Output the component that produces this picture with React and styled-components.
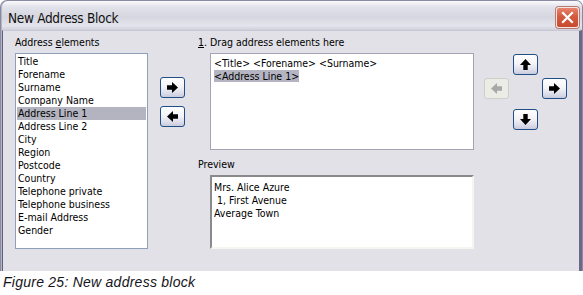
import React from "react";
import styled, { createGlobalStyle } from "styled-components";

const Global = createGlobalStyle`
  html, body { margin: 0; padding: 0; background: #ffffff; }
  body { font-family: "Liberation Sans", Arial, sans-serif; }
`;

const Page = styled.div`
  width: 583px;
  height: 295px;
  display: flex;
  flex-direction: column;
  overflow: hidden;
`;

const Window = styled.div`
  width: 583px;
  height: 271px;
  box-sizing: border-box;
  display: flex;
  flex-direction: column;
  border-radius: 7px 7px 0 0;
  background: #b4b4c6;
  border: 1px solid #8a8aa2;
  border-bottom: none;
  padding: 0 0 0 1px;
`;

const TitleBar = styled.div`
  height: 29px;
  flex: none;
  display: flex;
  align-items: center;
  justify-content: space-between;
  padding: 0 3px 0 6px;
  border-radius: 6px 6px 0 0;
  background: linear-gradient(to bottom, #fbfbfd 0%, #e2e2ea 20%, #d6d6e0 55%, #e4e4ec 85%, #d0d0dc 100%);
`;

const Title = styled.span`
  font-family: "DejaVu Sans Condensed", "Liberation Sans", Arial, sans-serif;
  font-size: 13.5px;
  letter-spacing: -0.3px;
  color: #111;
  padding-top: 5px;
`;

const CloseButton = styled.div`
  width: 21px;
  height: 19px;
  border: 1px solid #f4e6e2;
  border-radius: 3px;
  background: linear-gradient(to bottom, #e8846c 0%, #d45a3e 45%, #c84a2e 100%);
  display: flex;
  align-items: center;
  justify-content: center;
  box-shadow: 0 0 0 1px #b87a70;
  margin-top: 3px;
`;

const Body = styled.div`
  flex: 1;
  display: flex;
  align-items: flex-start;
  background: #e1e1e7;
  border-left: 1px solid #60607c;
  border-right: 3px solid #6a6a86;
  border-top: 1px solid #c8c8d4;
  padding: 5px 0 0 12px;
  font-family: "DejaVu Sans Condensed", "Liberation Sans", Arial, sans-serif;
  font-size: 10.5px;
  line-height: 13px;
  color: #000;
`;

const Column = styled.div`
  display: flex;
  flex-direction: column;
  flex: none;
  width: ${(p) => p.$w}px;
  margin-left: ${(p) => p.$ml || 0}px;
  margin-top: ${(p) => p.$mt || 0}px;
  gap: ${(p) => p.$gap || 0}px;
`;

const Label = styled.div`
  height: 13px;
  margin-top: ${(p) => p.$mt || 0}px;
  white-space: nowrap;
`;

const Key = styled.span`
  text-decoration: underline;
  text-underline-offset: 1px;
`;

const ListBox = styled.div`
  margin-top: 4px;
  height: 196px;
  box-sizing: border-box;
  border: 1px solid #8fa0b8;
  background: #fff;
  padding: 1px;
  display: flex;
  flex-direction: column;
`;

const ListItem = styled.div`
  height: 13px;
  padding-left: 1px;
  white-space: nowrap;
  background: ${(p) => (p.$selected ? "#b4b4c0" : "transparent")};
`;

const ArrowButton = styled.div`
  width: 25px;
  height: 21px;
  box-sizing: border-box;
  border: 1px solid ${(p) => (p.$disabled ? "#cfcfc8" : "#1f4f86")};
  border-radius: 3px;
  background: ${(p) =>
    p.$disabled
      ? "#ecece6"
      : "linear-gradient(to bottom, #ffffff 0%, #f4f4f8 45%, #dcdde9 80%, #c9cadc 100%)"};
  display: flex;
  align-items: center;
  justify-content: center;
  grid-area: ${(p) => p.$area || "auto"};
`;

const TextBox = styled.div`
  margin-top: 4px;
  margin-left: 12px;
  height: 97px;
  box-sizing: border-box;
  border: 1px solid #a4a4b4;
  background: #fff;
  padding: 3px 3px;
`;

const Line = styled.div`
  height: 13px;
  white-space: pre;
`;

const Mark = styled.span`
  background: #b4b4c2;
`;

const PreviewBox = styled.div`
  margin-top: 4px;
  margin-left: 12px;
  height: 74px;
  box-sizing: border-box;
  border-style: solid;
  border-width: 2px;
  border-color: #8a8a8a #f6f6f0 #f6f6f0 #8a8a8a;
  background: #fff;
  padding: 4px 2px;
`;

const Pad = styled.div`
  margin-left: 10px;
  margin-top: 18px;
  display: grid;
  grid-template-columns: 25px 25px 25px;
  grid-template-rows: 24px 31px 21px;
  column-gap: 4px;
  align-items: start;
  grid-template-areas:
    ". up ."
    "left . right"
    ". down .";
`;

const Caption = styled.div`
  padding: 2px 0 0 3px;
  font-family: "Liberation Sans", Arial, sans-serif;
  font-style: italic;
  font-size: 14px;
  letter-spacing: 0.25px;
  line-height: 18px;
  color: #141420;
`;

const Arrow = ({ dir = "right", color = "#000" }) => {
  const rot = { right: 0, down: 90, left: 180, up: 270 }[dir];
  return (
    <svg width="13" height="13" viewBox="0 0 13 13">
      <polygon
        points="1,4.3 6,4.3 6,1 12,6.5 6,12 6,8.7 1,8.7"
        fill={color}
        transform={`rotate(${rot} 6.5 6.5)`}
      />
    </svg>
  );
};

const items = [
  "Title",
  "Forename",
  "Surname",
  "Company Name",
  "Address Line 1",
  "Address Line 2",
  "City",
  "Region",
  "Postcode",
  "Country",
  "Telephone private",
  "Telephone business",
  "E-mail Address",
  "Gender",
];

export default function App() {
  return (
    <Page>
      <Global />
      <Window>
        <TitleBar>
          <Title>New Address Block</Title>
          <CloseButton>
            <svg width="13" height="13" viewBox="0 0 13 13">
              <path d="M2 2 L11 11 M11 2 L2 11" stroke="#fff" strokeWidth="2.2" strokeLinecap="square" />
            </svg>
          </CloseButton>
        </TitleBar>
        <Body>
          <Column $w={133}>
            <Label>
              Address <Key>e</Key>lements
            </Label>
            <ListBox>
              {items.map((it) => (
                <ListItem key={it} $selected={it === "Address Line 1"}>
                  {it}
                </ListItem>
              ))}
            </ListBox>
          </Column>
          <Column $w={25} $ml={12} $mt={41} $gap={8}>
            <ArrowButton>
              <Arrow dir="right" />
            </ArrowButton>
            <ArrowButton>
              <Arrow dir="left" />
            </ArrowButton>
          </Column>
          <Column $w={276} $ml={13}>
            <Label>
              <Key>1</Key>. Drag address elements here
            </Label>
            <TextBox>
              <Line>{"<Title> <Forename> <Surname>"}</Line>
              <Line>
                <Mark>{"<Address Line 1>"}</Mark>
              </Line>
            </TextBox>
            <Label $mt={8}>Preview</Label>
            <PreviewBox>
              <Line>Mrs. Alice Azure</Line>
              <Line>{" 1, First Avenue"}</Line>
              <Line>Average Town</Line>
            </PreviewBox>
          </Column>
          <Pad>
            <ArrowButton $area="up">
              <Arrow dir="up" />
            </ArrowButton>
            <ArrowButton $area="left" $disabled>
              <Arrow dir="left" color="#a8a8a8" />
            </ArrowButton>
            <ArrowButton $area="right">
              <Arrow dir="right" />
            </ArrowButton>
            <ArrowButton $area="down">
              <Arrow dir="down" />
            </ArrowButton>
          </Pad>
        </Body>
      </Window>
      <Caption>Figure 25: New address block</Caption>
    </Page>
  );
}
